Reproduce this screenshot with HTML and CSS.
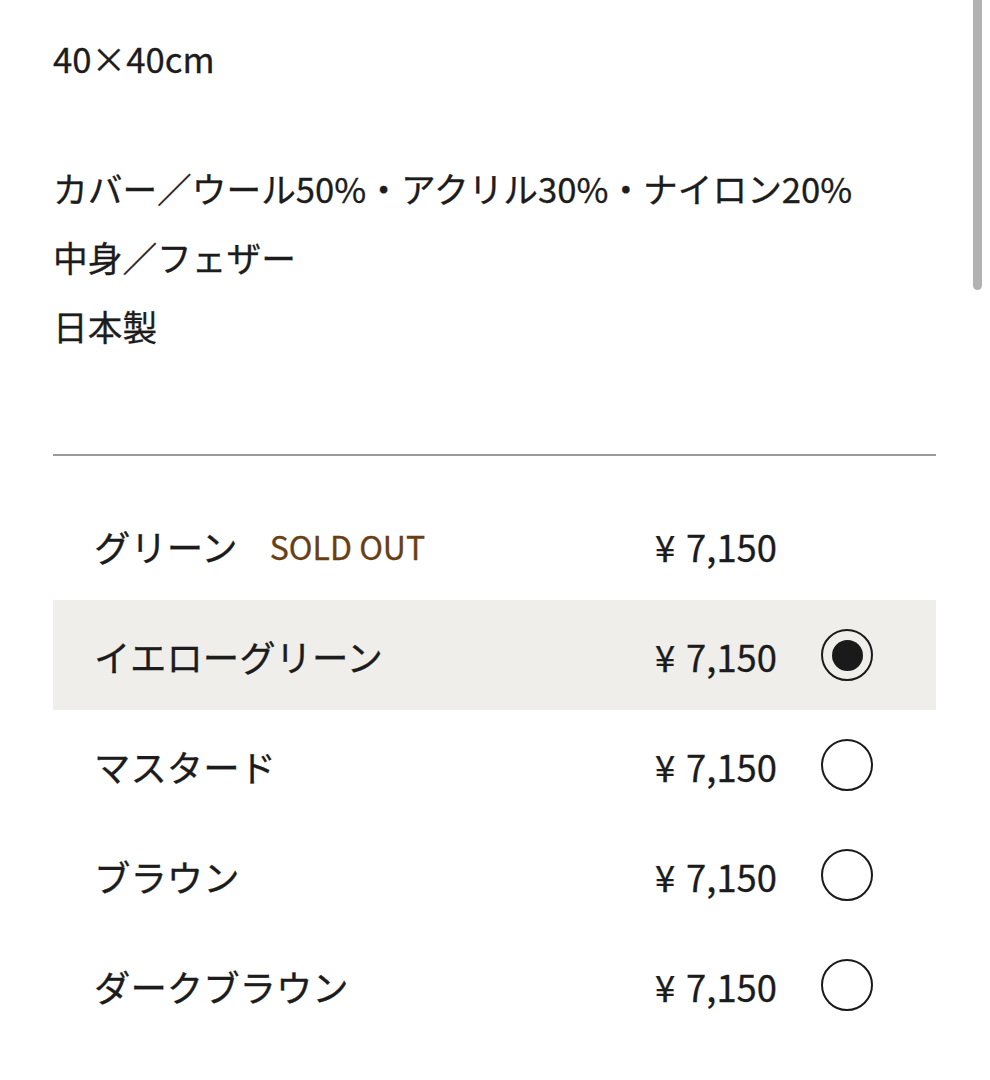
FILE: index.html
```html
<!DOCTYPE html>
<html lang="ja">
<head>
<meta charset="utf-8">
<title>商品詳細</title>
<link rel="stylesheet" href="styles.css">
</head>
<body>
<div class="page">
  <section class="spec">
    <p class="spec-block">40×40cm</p>
    <p class="spec-block">カバー／ウール50%・アクリル30%・ナイロン20%<br>中身／フェザー<br>日本製</p>
  </section>
  <hr class="divider">
  <ul class="options">
    <li class="option">
      <span class="label">グリーン<span class="soldout">SOLD OUT</span></span>
      <span class="price"><span class="yen">¥</span>7,150</span>
      <span class="radio-slot"></span>
    </li>
    <li class="option selected">
      <span class="label">イエローグリーン</span>
      <span class="price"><span class="yen">¥</span>7,150</span>
      <span class="radio checked"></span>
    </li>
    <li class="option">
      <span class="label">マスタード</span>
      <span class="price"><span class="yen">¥</span>7,150</span>
      <span class="radio"></span>
    </li>
    <li class="option">
      <span class="label">ブラウン</span>
      <span class="price"><span class="yen">¥</span>7,150</span>
      <span class="radio"></span>
    </li>
    <li class="option">
      <span class="label">ダークブラウン</span>
      <span class="price"><span class="yen">¥</span>7,150</span>
      <span class="radio"></span>
    </li>
  </ul>
</div>
<div class="scrollbar"></div>
</body>
</html>
```

FILE: styles.css
```css
html, body {
  margin: 0;
  padding: 0;
  background: #ffffff;
}
body {
  font-family: "Noto Sans CJK JP", "Noto Sans", sans-serif;
  color: #1c1c1c;
  font-size: 34.7px;
  font-weight: 400;
  -webkit-text-stroke: 0.3px currentColor;
}
.page {
  padding: 24px 54px 0 53px;
}
.spec-block {
  margin: 0 0 61px 0;
  line-height: 69px;
}
.spec-block:last-child {
  margin-bottom: 93px;
}
.divider {
  border: 0;
  height: 2px;
  background: #9a9a9a;
  margin: 0;
}
.options {
  list-style: none;
  margin: 34px 0 0 0;
  padding: 0;
}
.option {
  display: grid;
  grid-template-columns: 1fr auto 52px;
  align-items: center;
  column-gap: 44px;
  height: 110px;
  padding: 0 63px 0 41px;
  box-sizing: border-box;
  font-size: 36.4px;
}
.option.selected {
  background: #efeeea;
}
.label {
  display: flex;
  align-items: center;
  padding-top: 2px;
}
.soldout {
  color: #6a3e14;
  font-size: 32px;
  margin-left: 32px;
}
.price {
  padding-top: 2px;
}
.yen {
  margin-right: 11px;
}
.radio, .radio-slot {
  width: 52px;
  height: 52px;
  box-sizing: border-box;
}
.radio {
  border: 2.5px solid #1a1a1a;
  border-radius: 50%;
  display: flex;
  align-items: center;
  justify-content: center;
  background: #ffffff;
}
.radio.checked {
  background: transparent;
}
.radio.checked::after {
  content: "";
  width: 31px;
  height: 31px;
  border-radius: 50%;
  background: #1a1a1a;
}
.scrollbar {
  position: absolute;
  top: 0;
  left: 973px;
  width: 9px;
  height: 290px;
  border-radius: 0 0 5px 5px;
  background: #b2b2b2;
}
```
